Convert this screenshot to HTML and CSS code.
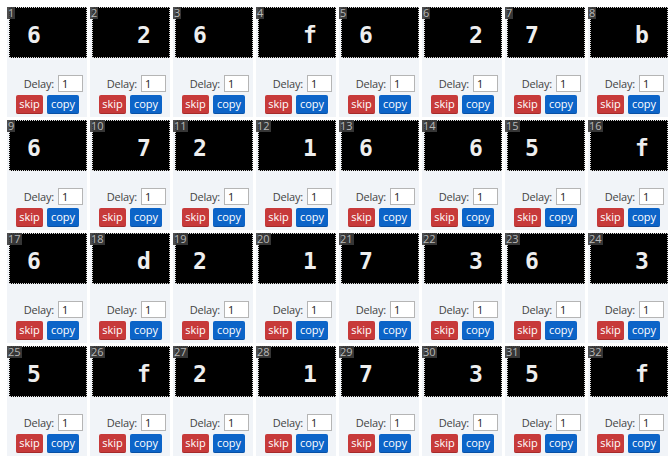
FILE: index.html
```html
<!DOCTYPE html>
<html>
<head>
<meta charset="utf-8">
<link rel="stylesheet" href="styles.css">
</head>
<body>
<div class="grid">
<div class="card"><span class="badge">1</span><div class="img"><span class="ch l">6</span></div><div class="delay"><span>Delay:</span><input class="inp" value="1"></div><div class="btns"><button class="skip">skip</button><button class="copy">copy</button></div></div>
<div class="card"><span class="badge">2</span><div class="img"><span class="ch r">2</span></div><div class="delay"><span>Delay:</span><input class="inp" value="1"></div><div class="btns"><button class="skip">skip</button><button class="copy">copy</button></div></div>
<div class="card"><span class="badge">3</span><div class="img"><span class="ch l">6</span></div><div class="delay"><span>Delay:</span><input class="inp" value="1"></div><div class="btns"><button class="skip">skip</button><button class="copy">copy</button></div></div>
<div class="card"><span class="badge">4</span><div class="img"><span class="ch r">f</span></div><div class="delay"><span>Delay:</span><input class="inp" value="1"></div><div class="btns"><button class="skip">skip</button><button class="copy">copy</button></div></div>
<div class="card"><span class="badge">5</span><div class="img"><span class="ch l">6</span></div><div class="delay"><span>Delay:</span><input class="inp" value="1"></div><div class="btns"><button class="skip">skip</button><button class="copy">copy</button></div></div>
<div class="card"><span class="badge">6</span><div class="img"><span class="ch r">2</span></div><div class="delay"><span>Delay:</span><input class="inp" value="1"></div><div class="btns"><button class="skip">skip</button><button class="copy">copy</button></div></div>
<div class="card"><span class="badge">7</span><div class="img"><span class="ch l">7</span></div><div class="delay"><span>Delay:</span><input class="inp" value="1"></div><div class="btns"><button class="skip">skip</button><button class="copy">copy</button></div></div>
<div class="card"><span class="badge">8</span><div class="img"><span class="ch r">b</span></div><div class="delay"><span>Delay:</span><input class="inp" value="1"></div><div class="btns"><button class="skip">skip</button><button class="copy">copy</button></div></div>

<div class="card"><span class="badge">9</span><div class="img"><span class="ch l">6</span></div><div class="delay"><span>Delay:</span><input class="inp" value="1"></div><div class="btns"><button class="skip">skip</button><button class="copy">copy</button></div></div>
<div class="card"><span class="badge">10</span><div class="img"><span class="ch r">7</span></div><div class="delay"><span>Delay:</span><input class="inp" value="1"></div><div class="btns"><button class="skip">skip</button><button class="copy">copy</button></div></div>
<div class="card"><span class="badge">11</span><div class="img"><span class="ch l">2</span></div><div class="delay"><span>Delay:</span><input class="inp" value="1"></div><div class="btns"><button class="skip">skip</button><button class="copy">copy</button></div></div>
<div class="card"><span class="badge">12</span><div class="img"><span class="ch r">1</span></div><div class="delay"><span>Delay:</span><input class="inp" value="1"></div><div class="btns"><button class="skip">skip</button><button class="copy">copy</button></div></div>
<div class="card"><span class="badge">13</span><div class="img"><span class="ch l">6</span></div><div class="delay"><span>Delay:</span><input class="inp" value="1"></div><div class="btns"><button class="skip">skip</button><button class="copy">copy</button></div></div>
<div class="card"><span class="badge">14</span><div class="img"><span class="ch r">6</span></div><div class="delay"><span>Delay:</span><input class="inp" value="1"></div><div class="btns"><button class="skip">skip</button><button class="copy">copy</button></div></div>
<div class="card"><span class="badge">15</span><div class="img"><span class="ch l">5</span></div><div class="delay"><span>Delay:</span><input class="inp" value="1"></div><div class="btns"><button class="skip">skip</button><button class="copy">copy</button></div></div>
<div class="card"><span class="badge">16</span><div class="img"><span class="ch r">f</span></div><div class="delay"><span>Delay:</span><input class="inp" value="1"></div><div class="btns"><button class="skip">skip</button><button class="copy">copy</button></div></div>

<div class="card"><span class="badge">17</span><div class="img"><span class="ch l">6</span></div><div class="delay"><span>Delay:</span><input class="inp" value="1"></div><div class="btns"><button class="skip">skip</button><button class="copy">copy</button></div></div>
<div class="card"><span class="badge">18</span><div class="img"><span class="ch r">d</span></div><div class="delay"><span>Delay:</span><input class="inp" value="1"></div><div class="btns"><button class="skip">skip</button><button class="copy">copy</button></div></div>
<div class="card"><span class="badge">19</span><div class="img"><span class="ch l">2</span></div><div class="delay"><span>Delay:</span><input class="inp" value="1"></div><div class="btns"><button class="skip">skip</button><button class="copy">copy</button></div></div>
<div class="card"><span class="badge">20</span><div class="img"><span class="ch r">1</span></div><div class="delay"><span>Delay:</span><input class="inp" value="1"></div><div class="btns"><button class="skip">skip</button><button class="copy">copy</button></div></div>
<div class="card"><span class="badge">21</span><div class="img"><span class="ch l">7</span></div><div class="delay"><span>Delay:</span><input class="inp" value="1"></div><div class="btns"><button class="skip">skip</button><button class="copy">copy</button></div></div>
<div class="card"><span class="badge">22</span><div class="img"><span class="ch r">3</span></div><div class="delay"><span>Delay:</span><input class="inp" value="1"></div><div class="btns"><button class="skip">skip</button><button class="copy">copy</button></div></div>
<div class="card"><span class="badge">23</span><div class="img"><span class="ch l">6</span></div><div class="delay"><span>Delay:</span><input class="inp" value="1"></div><div class="btns"><button class="skip">skip</button><button class="copy">copy</button></div></div>
<div class="card"><span class="badge">24</span><div class="img"><span class="ch r">3</span></div><div class="delay"><span>Delay:</span><input class="inp" value="1"></div><div class="btns"><button class="skip">skip</button><button class="copy">copy</button></div></div>

<div class="card"><span class="badge">25</span><div class="img"><span class="ch l">5</span></div><div class="delay"><span>Delay:</span><input class="inp" value="1"></div><div class="btns"><button class="skip">skip</button><button class="copy">copy</button></div></div>
<div class="card"><span class="badge">26</span><div class="img"><span class="ch r">f</span></div><div class="delay"><span>Delay:</span><input class="inp" value="1"></div><div class="btns"><button class="skip">skip</button><button class="copy">copy</button></div></div>
<div class="card"><span class="badge">27</span><div class="img"><span class="ch l">2</span></div><div class="delay"><span>Delay:</span><input class="inp" value="1"></div><div class="btns"><button class="skip">skip</button><button class="copy">copy</button></div></div>
<div class="card"><span class="badge">28</span><div class="img"><span class="ch r">1</span></div><div class="delay"><span>Delay:</span><input class="inp" value="1"></div><div class="btns"><button class="skip">skip</button><button class="copy">copy</button></div></div>
<div class="card"><span class="badge">29</span><div class="img"><span class="ch l">7</span></div><div class="delay"><span>Delay:</span><input class="inp" value="1"></div><div class="btns"><button class="skip">skip</button><button class="copy">copy</button></div></div>
<div class="card"><span class="badge">30</span><div class="img"><span class="ch r">3</span></div><div class="delay"><span>Delay:</span><input class="inp" value="1"></div><div class="btns"><button class="skip">skip</button><button class="copy">copy</button></div></div>
<div class="card"><span class="badge">31</span><div class="img"><span class="ch l">5</span></div><div class="delay"><span>Delay:</span><input class="inp" value="1"></div><div class="btns"><button class="skip">skip</button><button class="copy">copy</button></div></div>
<div class="card"><span class="badge">32</span><div class="img"><span class="ch r">f</span></div><div class="delay"><span>Delay:</span><input class="inp" value="1"></div><div class="btns"><button class="skip">skip</button><button class="copy">copy</button></div></div>
</div>
</body>
</html>
```
FILE: styles.css
```css
html, body {
  margin: 0;
  padding: 0;
  background: #ffffff;
}
body {
  padding: 7px;
  font-family: "Open Sans", "Noto Sans", "DejaVu Sans", sans-serif;
  font-size: 11px;
  color: #333;
}
.grid {
  display: grid;
  grid-template-columns: repeat(8, 80px);
  grid-auto-rows: 110px;
  gap: 3px;
}
.card {
  position: relative;
  background: #f1f4f8;
  display: flex;
  flex-direction: column;
  padding-left: 2px;
  box-sizing: border-box;
}
.badge {
  position: absolute;
  left: 0;
  top: 0;
  background: rgba(60, 60, 60, 0.9);
  color: #b8b8b8;
  font-size: 11px;
  line-height: 12px;
  padding: 0 1px;
  min-width: 5px;
  z-index: 2;
}
.img {
  width: 78px;
  height: 51px;
  background: #000;
  border: 1px dotted #d8d8d8;
  box-sizing: border-box;
  display: flex;
  align-items: center;
}
.ch {
  color: #eeeeee;
  font-family: "DejaVu Sans Mono", monospace;
  font-weight: bold;
  font-size: 23px;
  line-height: 1;
  width: 14px;
  text-align: center;
  padding-top: 5px;
}
.ch.l { margin-left: 17px; }
.ch.r { margin-left: 44px; }
.delay {
  margin-top: 17px;
  height: 17px;
  display: flex;
  justify-content: flex-end;
  align-items: center;
  gap: 4px;
  padding-right: 4px;
  color: #444;
  letter-spacing: -0.2px;
}
.inp {
  width: 25px;
  height: 17px;
  box-sizing: border-box;
  border: 1px solid #b5b5b5;
  background: #fff;
  font-family: inherit;
  font-size: 11px;
  padding: 0 3px;
  margin: 0;
  color: #222;
  outline: none;
}
.btns {
  margin-top: 3px;
  display: flex;
  justify-content: center;
  gap: 4px;
  padding-right: 1px;
}
.btns button {
  height: 19px;
  border: none;
  border-radius: 2px;
  color: #fff;
  font-family: inherit;
  font-size: 11px;
  padding: 0;
  margin: 0;
  line-height: 18px;
}
.skip {
  width: 27px;
  background: #c73a3a;
  border-bottom: 1px solid #a52a2a !important;
}
.copy {
  width: 32px;
  background: #0c64c8;
  border-bottom: 1px solid #0850a4 !important;
}
```
